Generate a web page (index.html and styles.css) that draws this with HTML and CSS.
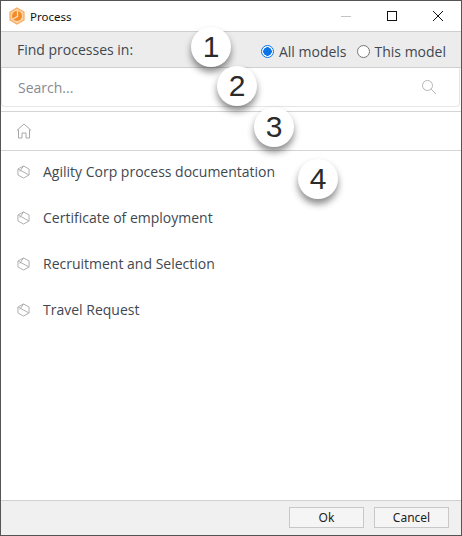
FILE: index.html
```html
<!DOCTYPE html>
<html lang="en">

<head>
    <meta charset="UTF-8">
    <title>Process</title>
    <link rel="stylesheet" href="styles.css">
</head>

<body>
    <div class="window">
        <div class="titlebar">
            <svg class="app_icon" width="16" height="18" viewBox="0 0 16 18">
                <path d="M8 1 15 5v8l-7 4-7-4V5z" fill="#fbd3a6" stroke="#f7a95c" stroke-width="1.2" />
                <circle cx="8" cy="9" r="5" fill="#f28c28" />
                <path d="M8.500 4v5.500L4 12" fill="none" stroke="#fde3c8" stroke-width="1.2" />
            </svg>
            <span class="title">Process</span>
            <div class="win_btns">
                <svg class="win_btn" width="46" height="31" viewBox="0 0 46 31">
                    <path d="M18 15.5h10" stroke="#c4c4c4" />
                </svg>
                <svg class="win_btn" width="46" height="31" viewBox="0 0 46 31">
                    <rect x="18.5" y="10.5" width="9" height="9" fill="none" stroke="#111" />
                </svg>
                <svg class="win_btn" width="46" height="31" viewBox="0 0 46 31">
                    <path d="M18 10l10 10M28 10 18 20" stroke="#111" fill="none" />
                </svg>
            </div>
        </div>

        <div class="scope">
            <span class="scope_label">Find processes in:</span>
            <div class="radios">
                <label class="radio"><span class="dot dot_on"></span>All models</label>
                <label class="radio"><span class="dot"></span>This model</label>
            </div>
        </div>

        <div class="search_wrap">
            <div class="search">
                <span class="placeholder">Search...</span>
                <svg width="16" height="16" viewBox="0 0 16 16">
                    <circle cx="6.5" cy="6.5" r="5" fill="none" stroke="#b5b5b5" />
                    <path d="M10.2 10.2 15 15" stroke="#b5b5b5" />
                </svg>
            </div>
        </div>

        <div class="crumb">
            <svg width="16" height="16" viewBox="0 0 16 16">
                <path d="M.8 7.5 8 1l7.2 6.5M2.500 6.500v8.500h3.500v-5h4v5h3.500V6.500" fill="none" stroke="#a8a8a8" />
            </svg>
        </div>

        <ul class="list">
            <li class="item">
                <svg class="cube" width="13" height="14" viewBox="0 0 14 15">
                    <path d="M7 1 13 4.300v6.400L7 14 1 10.700V4.300zM1.500 4.500 12.500 10.500M7 1 3 7" fill="none" stroke="#a9a9a9" />
                </svg>
                <span>Agility Corp process documentation</span>
            </li>
            <li class="item">
                <svg class="cube" width="13" height="14" viewBox="0 0 14 15">
                    <path d="M7 1 13 4.300v6.400L7 14 1 10.700V4.300zM1.500 4.500 12.500 10.500M7 1 3 7" fill="none" stroke="#a9a9a9" />
                </svg>
                <span>Certificate of employment</span>
            </li>
            <li class="item">
                <svg class="cube" width="13" height="14" viewBox="0 0 14 15">
                    <path d="M7 1 13 4.300v6.400L7 14 1 10.700V4.300zM1.500 4.500 12.500 10.500M7 1 3 7" fill="none" stroke="#a9a9a9" />
                </svg>
                <span>Recruitment and Selection</span>
            </li>
            <li class="item">
                <svg class="cube" width="13" height="14" viewBox="0 0 14 15">
                    <path d="M7 1 13 4.300v6.400L7 14 1 10.700V4.300zM1.500 4.500 12.500 10.500M7 1 3 7" fill="none" stroke="#a9a9a9" />
                </svg>
                <span>Travel Request</span>
            </li>
        </ul>

        <div class="footer">
            <button class="btn">Ok</button>
            <button class="btn">Cancel</button>
        </div>

        <!-- numbered callouts lie over the dialog -->
        <div class="callout c1">1</div>
        <div class="callout c2">2</div>
        <div class="callout c3">3</div>
        <div class="callout c4">4</div>
    </div>
</body>

</html>
```

FILE: styles.css
```css
* {
    margin: 0;
    padding: 0;
    box-sizing: border-box;
    list-style: none;
}

body {
    width: 462px;
    height: 536px;
    overflow: hidden;
    background: #fff;
    font-family: "Open Sans", "Noto Sans", sans-serif;
    color: #3f4850;
}

.window {
    position: relative;
    display: flex;
    flex-direction: column;
    width: 462px;
    height: 536px;
    border: 1px solid #555;
}

.titlebar {
    display: flex;
    align-items: center;
    height: 30px;
    padding-left: 8px;
    flex-shrink: 0;
}

.app_icon {
    margin-right: 5px;
}

.title {
    font-family: "Noto Sans", sans-serif;
    font-size: 11.5px;
    color: #111;
}

.win_btns {
    display: flex;
    margin-left: auto;
}

.win_btn {
    display: block;
}

.scope {
    display: flex;
    align-items: center;
    justify-content: space-between;
    height: 37px;
    padding: 0 15px 0 16px;
    background: #ececec;
    border-top: 1px solid #cfcfcf;
    border-bottom: 1px solid #cfcfcf;
    font-size: 14px;
    flex-shrink: 0;
}

.radios {
    display: flex;
    gap: 10px;
    margin-top: 4px;
}

.radio {
    display: flex;
    align-items: center;
    gap: 5px;
}

.dot {
    width: 13px;
    height: 13px;
    border: 1px solid #767676;
    border-radius: 50%;
    background: #fff;
}

.dot_on {
    border: 1px solid #0b75e8;
    background: radial-gradient(circle, #0b75e8 0 4px, #fff 4.500px);
}

.search_wrap {
    height: 44px;
    padding-right: 1px;
    border-bottom: 1px solid #d4d4d4;
    flex-shrink: 0;
}

.search {
    display: flex;
    align-items: center;
    justify-content: space-between;
    height: 39px;
    padding: 0 22px 0 16px;
    border: 1px solid #e6e6e6;
    border-top: none;
    border-radius: 0 0 4px 4px;
    font-size: 14px;
}

.placeholder {
    color: #858b90;
}

.crumb {
    display: flex;
    align-items: center;
    height: 39px;
    padding-left: 15px;
    border-bottom: 1px solid #d4d4d4;
    flex-shrink: 0;
}

.list {
    flex: 1;
    margin-top: -3px;
}

.item {
    display: flex;
    align-items: center;
    gap: 13px;
    height: 46px;
    padding-left: 16px;
    font-size: 14px;
}

.cube {
    flex-shrink: 0;
    margin-top: 1px;
}

.footer {
    display: flex;
    justify-content: flex-end;
    gap: 10px;
    height: 35px;
    padding: 6px 12px 0 0;
    background: #f0f0f0;
    border-top: 1px solid #d0d0d0;
    flex-shrink: 0;
}

.btn {
    width: 75px;
    height: 21px;
    background: #f5f5f5;
    border: 1px solid #c8c8c8;
    font-family: "Noto Sans", sans-serif;
    font-size: 12px;
    color: #222;
}

.callout {
    position: absolute;
    display: flex;
    align-items: center;
    justify-content: center;
    width: 40px;
    height: 40px;
    border-radius: 50%;
    background: #fff;
    box-shadow: 0 5px 7px rgba(0, 0, 0, 0.45);
    font-family: "Liberation Sans", sans-serif;
    font-size: 30px;
    color: #2b2b2b;
}

.c1 {
    left: 190px;
    top: 26px;
}

.c2 {
    left: 216px;
    top: 65px;
}

.c3 {
    left: 253px;
    top: 106px;
}

.c4 {
    left: 297px;
    top: 158px;
}
```
